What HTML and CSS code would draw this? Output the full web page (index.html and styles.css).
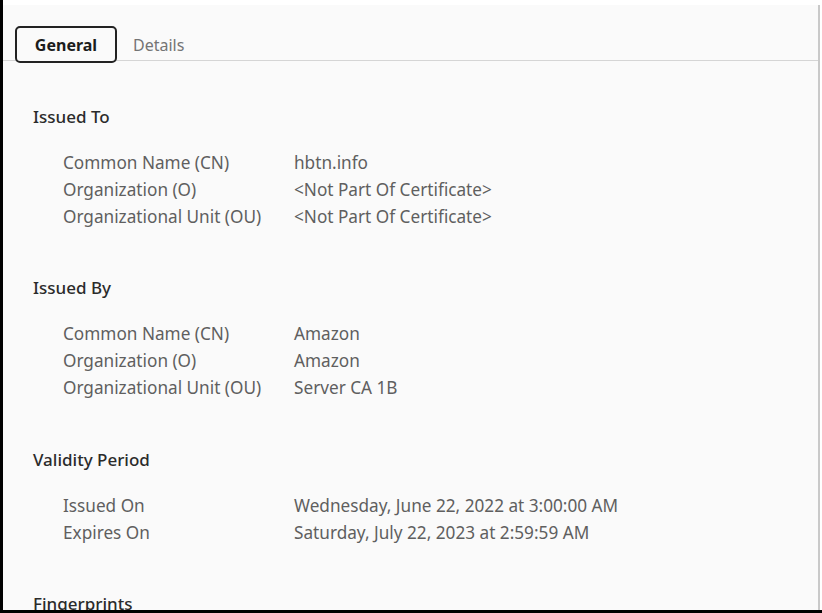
FILE: index.html
```html
<!DOCTYPE html>
<html>
<head>
<meta charset="utf-8">
<link rel="stylesheet" href="styles.css">
</head>
<body>
<div class="frame">
  <div class="window">
    <div class="tabbar">
      <div class="tab active">General</div>
      <div class="tab">Details</div>
    </div>
    <div class="content">
      <section class="section">
        <h2 class="heading">Issued To</h2>
        <div class="rows">
          <div class="label">Common Name (CN)</div><div class="value">hbtn.info</div>
          <div class="label">Organization (O)</div><div class="value">&lt;Not Part Of Certificate&gt;</div>
          <div class="label">Organizational Unit (OU)</div><div class="value">&lt;Not Part Of Certificate&gt;</div>
        </div>
      </section>
      <section class="section">
        <h2 class="heading">Issued By</h2>
        <div class="rows">
          <div class="label">Common Name (CN)</div><div class="value">Amazon</div>
          <div class="label">Organization (O)</div><div class="value">Amazon</div>
          <div class="label">Organizational Unit (OU)</div><div class="value">Server CA 1B</div>
        </div>
      </section>
      <section class="section">
        <h2 class="heading">Validity Period</h2>
        <div class="rows">
          <div class="label">Issued On</div><div class="value">Wednesday, June 22, 2022 at 3:00:00 AM</div>
          <div class="label">Expires On</div><div class="value">Saturday, July 22, 2023 at 2:59:59 AM</div>
        </div>
      </section>
      <section class="section">
        <h2 class="heading">Fingerprints</h2>
      </section>
    </div>
  </div>
</div>
</body>
</html>
```

FILE: styles.css
```css
html, body {
  margin: 0;
  padding: 0;
  background: #ffffff;
  overflow: hidden;
}
body {
  font-family: "Noto Sans", "Open Sans", sans-serif;
  font-size: 17.2px;
}
.frame {
  width: 822px;
  height: 613px;
  box-sizing: border-box;
  border-left: 3px solid #000;
  border-bottom: 3px solid #000;
  padding-top: 5px;
  padding-right: 2px;
  overflow: hidden;
}
.window {
  height: 100%;
  background: #fafafa;
  border-right: 2px solid #c9c9c9;
  overflow: hidden;
}
.tabbar {
  height: 56px;
  box-sizing: border-box;
  border-bottom: 1px solid #d5d5d5;
  display: flex;
  align-items: flex-end;
  padding-left: 12px;
}
.tab {
  height: 37px;
  box-sizing: border-box;
  display: flex;
  align-items: center;
  font-size: 16px;
  color: #747474;
  padding: 0 16px;
  margin-bottom: -3px;
}
.tab.active {
  width: 102px;
  justify-content: center;
  border: 2px solid #222;
  border-radius: 5px;
  color: #1c1c1c;
  font-weight: 700;
  background: #fafafa;
}
.content {
  padding: 41.5px 0 0 30px;
}
.section {
  margin-bottom: 44.5px;
}
.heading {
  margin: 0 0 18.5px 0;
  font-size: 17px;
  font-weight: 500;
  line-height: 27.5px;
  color: #2b2b2b;
}
.rows {
  display: grid;
  grid-template-columns: 231px auto;
  padding-left: 30px;
  line-height: 27px;
  color: #5f5f5f;
}
```
